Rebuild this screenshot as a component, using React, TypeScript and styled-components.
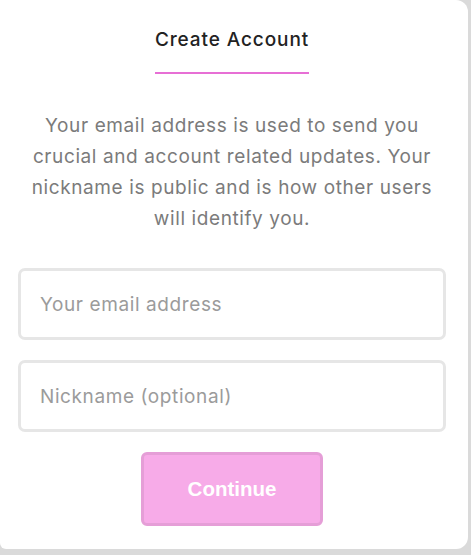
import React from "react";
import styled, { createGlobalStyle } from "styled-components";

const Global = createGlobalStyle`
  html, body {
    margin: 0;
    padding: 0;
    background: #dadada;
  }
  body {
    font-family: Inter, "Noto Sans", sans-serif;
    width: 471px;
    height: 555px;
    overflow: hidden;
  }
`;

const Panel = styled.div`
  box-sizing: border-box;
  width: 468px;
  height: 549px;
  background: #ffffff;
  border-radius: 0 12px 12px 6px;
  padding: 26px 22px 0 18px;
  display: flex;
  flex-direction: column;
  align-items: center;
`;

const Title = styled.h1`
  margin: 0;
  font-size: 19px;
  line-height: 28px;
  font-weight: 500;
  color: #222222;
  letter-spacing: 0.9px;
`;

const Underline = styled.div`
  width: 154px;
  height: 2px;
  margin-top: 18px;
  background: #e76fd5;
`;

const Description = styled.p`
  margin: 36px 0 0;
  width: 428px;
  text-align: center;
  font-size: 19px;
  line-height: 31px;
  letter-spacing: 0.6px;
  color: #7b7b7b;
  white-space: nowrap;
`;

const Form = styled.form`
  width: 100%;
  margin-top: 34px;
  display: flex;
  flex-direction: column;
  align-items: center;
  gap: 20px;
`;

const Field = styled.input`
  box-sizing: border-box;
  width: 100%;
  height: 72px;
  border: 3px solid #e6e6e6;
  border-radius: 7px;
  padding: 0 19px;
  font-family: Inter, "Noto Sans", sans-serif;
  font-size: 19px;
  letter-spacing: 0.6px;
  color: #333;
  background: #fff;
  outline: none;
  &::placeholder {
    color: #9b9b9b;
  }
`;

const Button = styled.button`
  box-sizing: border-box;
  width: 182px;
  height: 74px;
  background: #f7abe8;
  border: 3px solid #e59ed7;
  border-radius: 6px;
  color: #ffffff;
  font-family: "Liberation Sans", Arial, sans-serif;
  font-weight: 700;
  font-size: 20.5px;
  cursor: pointer;
`;

export default function App() {
  return (
    <>
      <Global />
      <Panel>
        <Title>Create Account</Title>
        <Underline />
        <Description>
          Your email address is used to send you
          <br />
          crucial and account related updates. Your
          <br />
          nickname is public and is how other users
          <br />
          will identify you.
        </Description>
        <Form onSubmit={(e) => e.preventDefault()}>
          <Field type="email" placeholder="Your email address" />
          <Field type="text" placeholder="Nickname (optional)" />
          <Button type="submit">Continue</Button>
        </Form>
      </Panel>
    </>
  );
}
